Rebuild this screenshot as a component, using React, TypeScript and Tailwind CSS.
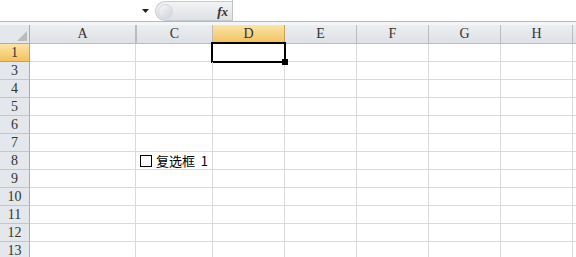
import React from "react";

const cols = [
  { w: "w-[106px]", label: "A" },
  { w: "w-[77px]", label: "C" },
  { w: "w-[72px]", label: "D" },
  { w: "w-[72px]", label: "E" },
  { w: "w-[72px]", label: "F" },
  { w: "w-[72px]", label: "G" },
  { w: "w-[72px]", label: "H" },
];

const rows = [1, 3, 4, 5, 6, 7, 8, 9, 10, 11, 12, 13];

const serif = { fontFamily: '"Liberation Serif", "Noto Sans CJK SC", serif' };

export default function App() {
  return (
    <div className="w-[576px] h-[257px] overflow-hidden bg-white relative" style={serif}>
      {/* Formula bar */}
      <div className="h-[22px] flex border-b border-[#b4b8be]">
        <div className="w-[155px] bg-white relative flex items-center justify-end pr-[6px]">
          <svg width="7" height="4" viewBox="0 0 7 4">
            <path d="M0 0 H7 L3.5 4 Z" fill="#222" />
          </svg>
        </div>
        <div className="w-[77px] h-[20px] mt-[1px] rounded-l-[10px] bg-gradient-to-b from-[#f2f3f5] to-[#dde0e4] border border-r-0 border-[#c7cbd0] relative flex items-center justify-end pr-[4px]">
          <div className="absolute left-[2px] top-[2px] w-[15px] h-[15px] rounded-full bg-gradient-to-br from-[#f7f8f9] to-[#cfd3d8] border border-[#d5d8dc]" />
          <span className="text-[13px] italic font-bold text-[#333] leading-none">fx</span>
        </div>
        <div className="flex-1 bg-white border-l border-[#c0c4c8]" />
      </div>
      <div className="h-[3px] bg-[#f4f5f6]" />

      {/* Header row */}
      <div className="flex h-[19px]">
        <div className="w-[30px] shrink-0 bg-[#e4e7eb] border-r border-b border-[#a8adb3] relative">
          <svg width="10" height="10" viewBox="0 0 10 10" className="absolute right-[2px] bottom-[2px]">
            <path d="M10 0 V10 H0 Z" fill="#b8bcc1" />
          </svg>
        </div>
        {cols.map((c, i) => {
          const sel = c.label === "D";
          return (
            <div
              key={c.label}
              className={`${c.w} shrink-0 flex items-center justify-center text-[14px] leading-none border-r border-b ${
                sel
                  ? "bg-gradient-to-b from-[#fbe4a6] to-[#f3c25a] border-[#c9a24e] text-[#333]"
                  : "bg-gradient-to-b from-[#eceef1] to-[#dee1e5] border-[#b9bdc2] text-[#333]"
              } ${i === 1 ? "border-l border-l-[#b9bdc2]" : ""}`}
            >
              {c.label}
            </div>
          );
        })}
        <div className="flex-1 bg-gradient-to-b from-[#eceef1] to-[#dee1e5] border-b border-[#b9bdc2]" />
      </div>

      {/* Body rows */}
      {rows.map((r) => (
        <div key={r} className="flex h-[18px]">
          <div
            className={`w-[30px] shrink-0 flex items-center justify-center text-[14px] leading-none border-r border-b ${
              r === 1
                ? "bg-gradient-to-b from-[#fbe4a6] to-[#f3c25a] border-[#c9a24e] text-[#333]"
                : "bg-[#e4e7eb] border-[#c3c7cc] border-r-[#a8adb3] text-[#333]"
            }`}
          >
            {r}
          </div>
          {cols.map((c) => (
            <div key={c.label} className={`${c.w} shrink-0 border-r border-b border-[#dadada] relative`}>
              {c.label === "D" && r === 1 && (
                <>
                  <div className="absolute -left-[2px] -top-[2px] w-[75px] h-[21px] border-2 border-black" />
                  <div className="absolute z-10 -right-[4px] -bottom-[4px] w-[6px] h-[6px] bg-black" />
                </>
              )}
              {c.label === "C" && r === 8 && (
                <div className="absolute left-[4px] top-[2px] flex items-center whitespace-nowrap">
                  <div className="w-[12px] h-[12px] border border-black bg-white" />
                  <span
                    className="ml-[4px] text-[13px] leading-none text-black"
                    style={{ fontFamily: '"Noto Sans CJK SC", "Liberation Serif", sans-serif' }}
                  >
                    复选框&nbsp;&nbsp;1
                  </span>
                </div>
              )}
            </div>
          ))}
          <div className="flex-1 border-b border-[#dadada]" />
        </div>
      ))}
    </div>
  );
}
